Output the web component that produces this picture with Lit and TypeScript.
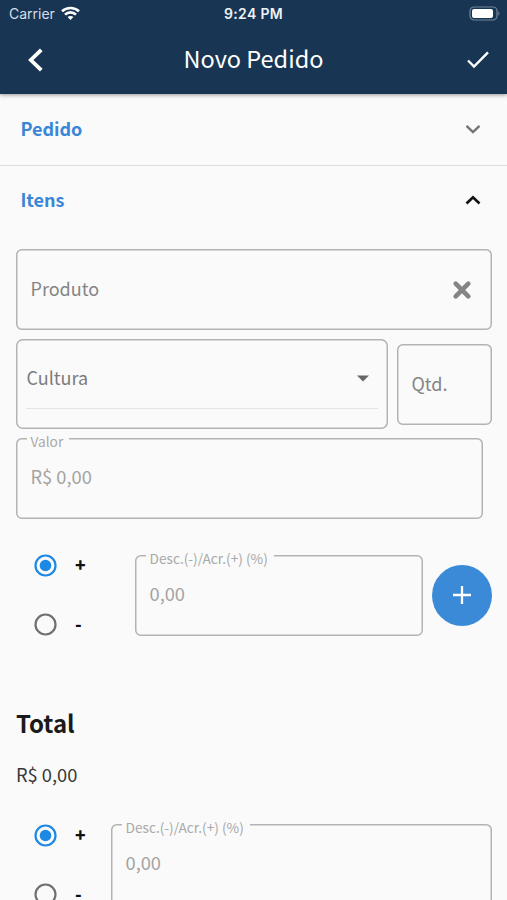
import { LitElement, html, css, svg } from "lit";
import { customElement, property } from "lit/decorators.js";

const font = css`"Noto Sans CJK SC", "Noto Sans", sans-serif`;

@customElement("outlined-field")
class OutlinedField extends LitElement {
  @property() label = "";
  @property() value = "";

  static styles = css`
    :host { display: block; position: relative; box-sizing: border-box; height: 81px; }
    .outline { position: absolute; inset: 0; width: 100%; height: 100%; overflow: visible; }
    .outline rect { fill: none; stroke: #b3b3b3; stroke-width: 1.5px; x: 0.75px; y: 0.75px; width: calc(100% - 1.5px); height: calc(100% - 1.5px); rx: 5px; }
    .notch { position: absolute; left: 11px; top: -6px; height: 18px; padding: 0 6px 0 4px; background: #fafafa; color: #a9a9a9; font: 13.7px/18px ${font}; white-space: nowrap; }
    .content { position: relative; display: flex; align-items: center; box-sizing: border-box; height: 100%; padding: 0 20px 0 15px; color: #858585; font: 18px/26px ${font}; white-space: nowrap; justify-content: space-between; }
    .text { padding-bottom: 3px; }
    .filled { color: #a3a3a3; padding-bottom: 2px; font-size: 18.3px; }
  `;

  render() {
    return html`
      <svg class="outline"><rect /></svg>
      ${this.value ? html`<span class="notch">${this.label}</span>` : ""}
      <div class="content ${this.value ? "filled" : ""}">
        <span class="text">${this.value || this.label}</span><slot></slot>
      </div>
    `;
  }
}

@customElement("sign-radios")
class SignRadios extends LitElement {
  static styles = css`
    :host { display: flex; flex-direction: column; gap: 34px; padding-left: 17px; }
    .row { display: flex; align-items: center; gap: 17.5px; height: 25px; color: #111; font: 900 17.5px/25px ${font}; }
    .row span { padding-bottom: 3px; }
    svg { display: block; width: 25px; height: 25px; }
  `;

  render() {
    return ["+", "-"].map(
      (sign) => html`<div class="row">
        <svg viewBox="0 0 25 25">
          <circle cx="12.5" cy="12.5" r="10" fill="none" stroke-width="2.2" stroke=${sign === "+" ? "#1e88e5" : "#707070"} />
          ${sign === "+" ? svg`<circle cx="12.5" cy="12.5" r="5.8" fill="#1e88e5" />` : ""}
        </svg>
        <span>${sign}</span>
      </div>`
    );
  }
}

@customElement("app-root")
class AppRoot extends LitElement {
  static styles = css`
    :host { display: block; height: 900px; overflow: hidden; background: #fafafa; font-family: ${font}; }
    svg { display: block; }
    .header { position: relative; height: 93.5px; background: #183653; color: #fff; box-shadow: 0 1px 4px rgba(0, 0, 0, 0.4); }
    .status { display: grid; grid-template-columns: 1fr auto 1fr; align-items: center; height: 27px; padding: 0 7px; font: 14px/27px Inter, sans-serif; }
    .carrier { display: flex; align-items: center; gap: 6px; padding-left: 2px; color: #d5dee7; }
    .time { font-weight: 600; font-size: 14px; letter-spacing: 0.35px; color: #eef2f6; }
    .battery { justify-self: end; }
    .nav { display: grid; grid-template-columns: 1fr auto 1fr; align-items: center; height: 66px; padding: 0 17px; }
    .back { margin-left: 9px; }
    .title { padding-bottom: 4px; font-size: 23.5px; line-height: 34px; }
    .done { justify-self: end; }
    .section { display: flex; align-items: center; justify-content: space-between; box-sizing: border-box; height: 69px; padding: 0 26px 0 20.4px; color: #3a86d6; font-weight: bold; font-size: 18px; line-height: 26px; }
    .section span { padding-bottom: 3px; }
    .divided { height: 72px; border-bottom: 1px solid #dedede; }
    .form { display: flex; flex-direction: column; padding: 14.5px 15.5px 0; }
    .pair { display: flex; align-items: center; gap: 9px; margin-top: 9px; }
    .select { flex: 1; height: 90px; position: relative; }
    .frame { position: absolute; inset: 0; width: 100%; height: 100%; overflow: visible; }
    .frame rect { fill: none; stroke: #b3b3b3; stroke-width: 1.5px; x: 0.75px; y: 0.75px; width: calc(100% - 1.5px); height: calc(100% - 1.5px); rx: 6px; }
    .choice { display: flex; align-items: center; justify-content: space-between; box-sizing: border-box; height: 60px; margin: 10px 10px 0; padding: 0 9px 0 1px; border-bottom: 1px solid #e4e4e4; color: #7c7c7c; font-size: 18px; line-height: 26px; }
    .choice span { padding-bottom: 4px; }
    .qty { width: 95px; }
    .price { margin: 8.5px 9px 0 0; }
    .adjust { display: flex; align-items: flex-start; margin-top: 33.5px; }
    .signs { width: 102px; flex: none; margin-top: 1px; }
    .rate { flex: 1; margin-top: 3px; }
    .add { display: flex; align-items: center; justify-content: center; width: 60px; height: 61px; margin: 12.5px 0 0 9px; border-radius: 50%; background: #3b8ad8; }
    .total { margin-top: 67.5px; padding-left: 0.5px; color: #1a1a1a; font-weight: bold; font-size: 24px; line-height: 36px; }
    .sum { margin-top: 20px; padding-left: 0.5px; color: #383838; font-size: 18.3px; line-height: 26px; }
    .last { margin-top: 34.5px; }
    .narrow { width: 78px; margin-top: 2px; }
  `;

  render() {
    return html`
      <div class="header">
        <div class="status">
          <span class="carrier">Carrier
            <svg width="19" height="15" viewBox="0 0 19 15" fill="none" stroke="#fff" stroke-width="2.6">
              <path d="M1 5.3C5.8.8 13.2.8 18 5.3" /><path d="M4 8.6c3.1-3 7.9-3 11 0" />
              <path d="M6.6 11.1c1.6-1.6 4.2-1.6 5.8 0L9.5 14z" fill="#fff" stroke="none" />
            </svg>
          </span>
          <span class="time">9:24 PM</span>
          <svg class="battery" width="31" height="15" viewBox="0 0 31 15">
            <rect x="1" y="1" width="27" height="13" rx="4" fill="none" stroke="#728599" stroke-width="1.2" />
            <rect x="3" y="3" width="21" height="9" rx="2" fill="#fff" />
            <path d="M29.3 5.3c1.5.7 1.5 3.7 0 4.4z" fill="#728599" />
          </svg>
        </div>
        <div class="nav">
          <svg class="back" width="18" height="26" viewBox="0 0 18 26" fill="none" stroke="#fff" stroke-width="3.8"><path d="M15.3 2.8 4.8 13l10.5 10.2" /></svg>
          <span class="title">Novo Pedido</span>
          <svg class="done" width="24" height="20" viewBox="0 0 24 20" fill="none" stroke="#fff" stroke-width="2.4"><path d="m2 10.5 6 6L22 2.3" /></svg>
        </div>
      </div>
      <div class="section divided">
        <span>Pedido</span>
        <svg width="16" height="10" viewBox="0 0 16 10" fill="none" stroke="#757575" stroke-width="2.4"><path d="m1.5 1.8 6.5 6.2 6.5-6.2" /></svg>
      </div>
      <div class="section">
        <span>Itens</span>
        <svg width="16" height="10" viewBox="0 0 16 10" fill="none" stroke="#111" stroke-width="2.6"><path d="M1.5 8.5 8 2.2l6.5 6.3" /></svg>
      </div>
      <div class="form">
        <outlined-field label="Produto">
          <svg width="20" height="20" viewBox="0 0 20 20" fill="none" stroke="#858585" stroke-width="4.6" stroke-linecap="round"><path d="m3.7 3.7 12.6 12.6M16.3 3.7 3.7 16.3" /></svg>
        </outlined-field>
        <div class="pair">
          <div class="select">
            <svg class="frame"><rect /></svg>
            <div class="choice">
              <span>Cultura</span>
              <svg width="12" height="7" viewBox="0 0 12 7"><path d="M0 .5h12l-6 6z" fill="#666" /></svg>
            </div>
          </div>
          <outlined-field class="qty" label="Qtd."></outlined-field>
        </div>
        <outlined-field class="price" label="Valor" value="R$ 0,00"></outlined-field>
        <div class="adjust">
          <sign-radios class="signs"></sign-radios>
          <outlined-field class="rate" label="Desc.(-)/Acr.(+) (%)" value="0,00"></outlined-field>
          <div class="add"><svg width="18" height="18" viewBox="0 0 18 18" stroke="#fff" stroke-width="2.3"><path d="M9 0v18M0 9h18" /></svg></div>
        </div>
        <div class="total">Total</div>
        <div class="sum">R$ 0,00</div>
        <div class="adjust last">
          <sign-radios class="signs narrow"></sign-radios>
          <outlined-field class="rate" label="Desc.(-)/Acr.(+) (%)" value="0,00"></outlined-field>
        </div>
      </div>
    `;
  }
}
